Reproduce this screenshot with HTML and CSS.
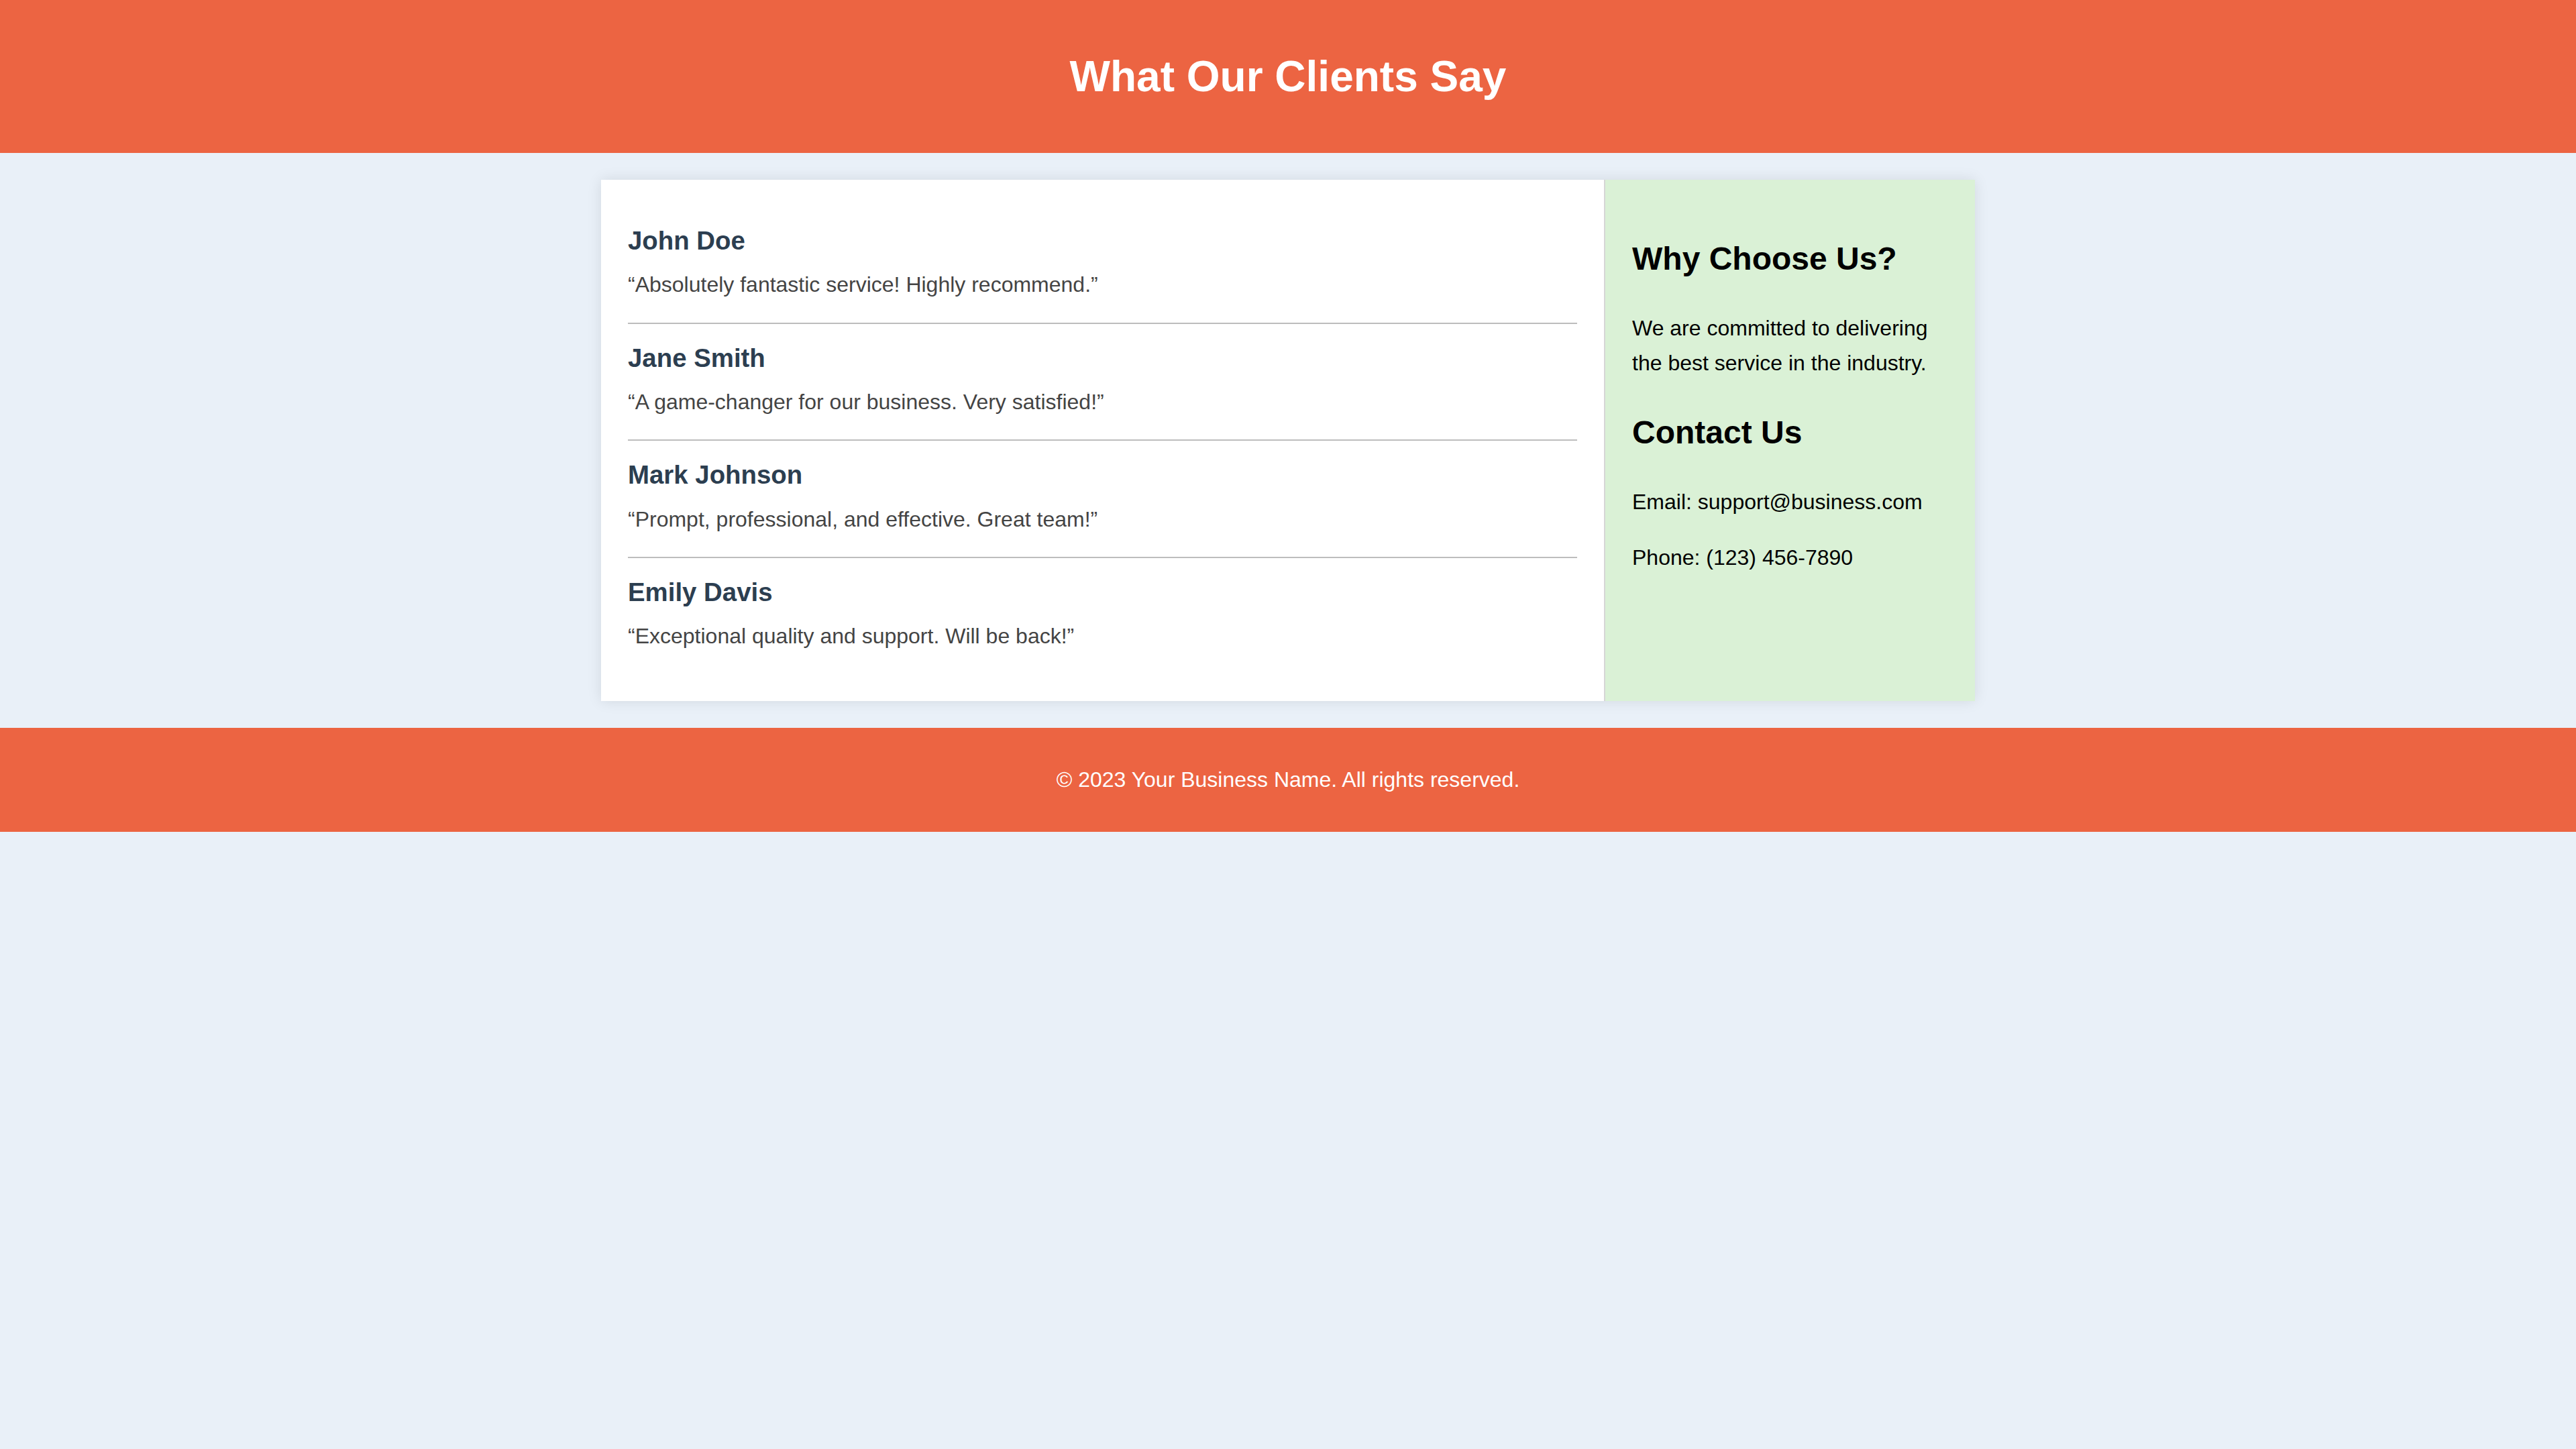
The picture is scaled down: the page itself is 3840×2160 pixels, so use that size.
FILE: index.html
```html
<!DOCTYPE html>
<html lang="en">
<head>
<meta charset="utf-8">
<title>What Our Clients Say</title>
<link rel="stylesheet" href="styles.css">
</head>
<body>
<header class="site-header">
  <h1 class="site-title">What Our Clients Say</h1>
</header>
<div class="container">
  <main class="testimonials">
    <div class="testimonial">
      <h3 class="name">John Doe</h3>
      <p class="quote">“Absolutely fantastic service! Highly recommend.”</p>
    </div>
    <div class="testimonial">
      <h3 class="name">Jane Smith</h3>
      <p class="quote">“A game-changer for our business. Very satisfied!”</p>
    </div>
    <div class="testimonial">
      <h3 class="name">Mark Johnson</h3>
      <p class="quote">“Prompt, professional, and effective. Great team!”</p>
    </div>
    <div class="testimonial">
      <h3 class="name">Emily Davis</h3>
      <p class="quote">“Exceptional quality and support. Will be back!”</p>
    </div>
  </main>
  <aside class="sidebar">
    <h2 class="side-title">Why Choose Us?</h2>
    <p class="side-text">We are committed to delivering the best service in the industry.</p>
    <h2 class="side-title">Contact Us</h2>
    <p class="side-text">Email: support@business.com</p>
    <p class="side-text">Phone: (123) 456-7890</p>
  </aside>
</div>
<footer class="site-footer">
  <p class="copyright">© 2023 Your Business Name. All rights reserved.</p>
</footer>
</body>
</html>
```
FILE: styles.css
```css
html, body {
  margin: 0;
  padding: 0;
}
body {
  background: #e9f0f8;
  font-family: "Liberation Sans", Arial, Helvetica, sans-serif;
  font-size: 32px;
  line-height: 1.6;
  color: #000;
}
.site-header {
  background: #ec6442;
  padding: 63px 0 62.6px;
  text-align: center;
}
.site-title {
  margin: 0;
  font-size: 64px;
  font-weight: bold;
  color: #fff;
}
.container {
  width: 2048px;
  margin: 40px auto 0;
  display: flex;
  background: #fff;
  box-shadow: 0 0 20px rgba(0, 0, 0, 0.1);
}
.testimonials {
  flex: 1;
  padding: 40px 40px 40.5px;
}
.testimonial {
  padding: 20px 0 30px;
  border-bottom: 2px solid #bdbdbd;
}
.testimonial:last-child {
  border-bottom: none;
}
.name {
  margin: 0 0 10px;
  font-size: 38.4px;
  font-weight: bold;
  color: #2c3e50;
}
.quote {
  margin: 0;
  color: #444;
}
.sidebar {
  box-sizing: border-box;
  width: 553px;
  flex: none;
  padding: 40px;
  background: #daf1d6;
  border-left: 2px solid #d6d6d6;
}
.side-title {
  font-size: 48px;
  font-weight: bold;
  margin: 39.84px 0;
}
.side-text {
  margin: 32px 0;
}
.site-footer {
  margin-top: 40px;
  background: #ec6442;
  padding: 52px 0 51.8px;
  text-align: center;
}
.copyright {
  margin: 0;
  color: #fff;
}
```
